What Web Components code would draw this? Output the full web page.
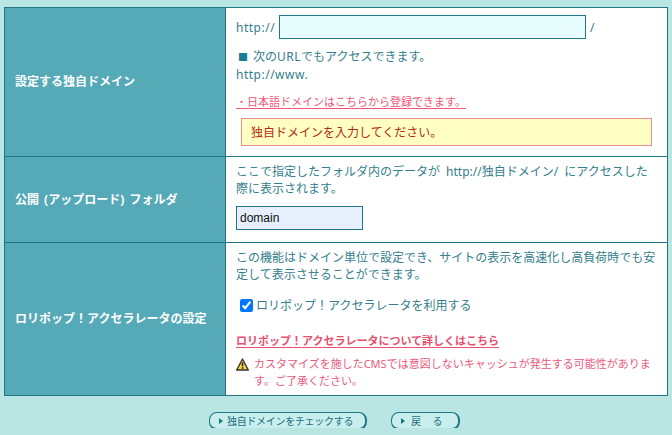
<!DOCTYPE html>
<html lang="ja">
<head>
<meta charset="utf-8">
<title>独自ドメイン設定</title>
<style>
  html, body { margin: 0; padding: 0; }
  body {
    background: #b9e6e3;
    font-family: "Noto Sans", "Noto Sans CJK JP", sans-serif;
    font-size: 12px;
    color: #33808c;
  }
  .lat { letter-spacing: .5px; }
  .mark { color: #1a7d90; margin: 0 5px 0 2px; font-size: 10px; }
  .jp-link, .more { text-underline-offset: 2px; }
  .check input { margin: 0 3px 0 0; width: 13px; height: 13px; }
</style>
</head>
<body>
<domain-page>
  <setting-table>
    <setting-row label="設定する独自ドメイン" style="--row-height: 148px">
      <div class="url-line">
        <span class="lat">http://</span><text-box wide></text-box><span>/</span>
      </div>
      <p class="note"><span class="mark">■</span>次の<span class="lat">URL</span>でもアクセスできます。</p>
      <p class="www lat">http://www.</p>
      <a class="jp-link" href="#">・日本語ドメインはこちらから登録できます。</a>
      <error-box>独自ドメインを入力してください。</error-box>
    </setting-row>
    <setting-row label="公開 (アップロード) フォルダ" style="--row-height: 85px">
      <p class="para">ここで指定したフォルダ内のデータが http://独自ドメイン/ にアクセスした際に表示されます。</p>
      <text-box value="domain"></text-box>
    </setting-row>
    <setting-row label="ロリポップ！アクセラレータの設定" style="--row-height: 152px">
      <p class="para">この機能はドメイン単位で設定でき、サイトの表示を高速化し高負荷時でも安定して表示させることができます。</p>
      <label class="check"><input type="checkbox" checked>ロリポップ！アクセラレータを利用する</label>
      <a class="more" href="#">ロリポップ！アクセラレータについて詳しくはこちら</a>
      <warn-note>カスタマイズを施したCMSでは意図しないキャッシュが発生する可能性があります。ご了承ください。</warn-note>
    </setting-row>
  </setting-table>
  <div class="buttons">
    <pill-button style="--w: 158px; --pad: 9px; --gap: 4px; --ls: -.3px">独自ドメインをチェックする</pill-button>
    <pill-button style="--w: 69px; --pad: 9px; --gap: 6px; --ls: .7px">戻　る</pill-button>
  </div>
</domain-page>
<script>
class DomainPage extends HTMLElement {
  constructor() {
    super();
    this.attachShadow({ mode: 'open' }).innerHTML = `
      <style>
        :host { display: block; padding: 7px 4px 0; height: 428px; box-sizing: border-box; }
        ::slotted(.buttons) { display: flex; justify-content: center; gap: 24px; margin-top: 16px; padding-right: 3px; }
      </style>
      <slot></slot>`;
  }
}

class SettingTable extends HTMLElement {
  constructor() {
    super();
    this.attachShadow({ mode: 'open' }).innerHTML = `
      <style>
        :host { display: block; border: 1px solid #1f7785; width: 664px; box-sizing: border-box; background: #fff; }
      </style>
      <slot></slot>`;
  }
}

class SettingRow extends HTMLElement {
  constructor() {
    super();
    this.attachShadow({ mode: 'open' }).innerHTML = `
      <style>
        :host { display: grid; grid-template-columns: 221px 1fr; height: var(--row-height); border-bottom: 1px solid #1f7785; }
        :host(:last-child) { border-bottom: 0; }
        .head {
          background: #56a9b7; color: #fff; font-weight: bold; font-size: 12px; word-spacing: 2px;
          display: flex; align-items: center; padding: 0 0 2px 10px;
          border-right: 1px solid #1f7785;
        }
        .body { padding: 7px 10px 0; line-height: 17px; }
        ::slotted(p) { margin: 0; }
        ::slotted(.url-line) { display: flex; align-items: center; gap: 4px; height: 24px; }
        ::slotted(.note) { margin-top: 9px; }
        ::slotted(.para) { width: 422px; margin-top: -1px; word-spacing: 3px; }
        ::slotted(.jp-link) { display: block; width: max-content; margin-top: 10px; color: #f0577b; font-size: 11px; }
        ::slotted(.check) { display: flex; align-items: center; margin: 14px 0 0 4px; }
        ::slotted(.more) { display: block; width: max-content; margin-top: 18px; color: #e9506f; font-weight: bold; font-size: 11px; }
      </style>
      <div class="head"></div>
      <div class="body"><slot></slot></div>`;
    this.shadowRoot.querySelector('.head').textContent = this.getAttribute('label');
  }
}

class TextBox extends HTMLElement {
  constructor() {
    super();
    const wide = this.hasAttribute('wide');
    this.attachShadow({ mode: 'open' }).innerHTML = `
      <style>
        :host { display: block; width: ${wide ? 307 : 127}px; margin-top: ${wide ? 0 : 9}px; }
        input {
          display: block; box-sizing: border-box; width: 100%; height: 24px; margin: 0;
          border: 1px solid #1f7785; border-radius: 0; padding: 0 3px; outline: 0;
          background: ${wide ? '#e8fdfe' : '#e6effb'}; color: #111;
          font: 12px "Liberation Sans", sans-serif;
        }
      </style>
      <input type="text">`;
    this.shadowRoot.querySelector('input').value = this.getAttribute('value') || '';
  }
}

class ErrorBox extends HTMLElement {
  constructor() {
    super();
    this.attachShadow({ mode: 'open' }).innerHTML = `
      <style>
        :host {
          display: block; box-sizing: border-box; width: 411px; height: 28px; margin: 8px 0 0 5px;
          background: #ffffc4; border: 1px solid #e88f8f; color: #b22a12;
          padding: 5px 9px 0; line-height: 18px;
        }
      </style>
      <slot></slot>`;
  }
}

class WarnNote extends HTMLElement {
  constructor() {
    super();
    this.attachShadow({ mode: 'open' }).innerHTML = `
      <style>
        :host { display: flex; gap: 5px; margin-top: 6px; color: #ea5a80; font-size: 11px; line-height: 17px; width: 420px; }
        svg { flex: none; margin-top: 3px; }
      </style>
      <svg width="13" height="13" viewBox="0 0 13 13">
        <path d="M6.5 1 L12.3 12 H.7 Z" fill="#f4d03f" stroke="#333" stroke-width="1.4" stroke-linejoin="round"/>
        <path d="M6.5 4.5 V8.3 M6.5 9.3 V10.8" stroke="#1c1c1c" stroke-width="1.5"/>
      </svg>
      <div><slot></slot></div>`;
  }
}

class PillButton extends HTMLElement {
  constructor() {
    super();
    this.attachShadow({ mode: 'open' }).innerHTML = `
      <style>
        :host {
          display: flex; align-items: center; box-sizing: border-box; width: var(--w); height: 18px;
          border: 1px solid #1f7785; border-width: 1px 2px 2px 1px; border-radius: 8px;
          background: #c9eeee; color: #1f6f7d; font-size: 10px; padding-left: var(--pad); gap: var(--gap);
          letter-spacing: var(--ls, 0); white-space: nowrap;
        }
        i { width: 0; height: 0; border-left: 4px solid #1f7785; border-top: 3px solid transparent; border-bottom: 3px solid transparent; }
      </style>
      <i></i><slot></slot>`;
  }
}

customElements.define('domain-page', DomainPage);
customElements.define('setting-table', SettingTable);
customElements.define('setting-row', SettingRow);
customElements.define('text-box', TextBox);
customElements.define('error-box', ErrorBox);
customElements.define('warn-note', WarnNote);
customElements.define('pill-button', PillButton);
</script>
</body>
</html>
